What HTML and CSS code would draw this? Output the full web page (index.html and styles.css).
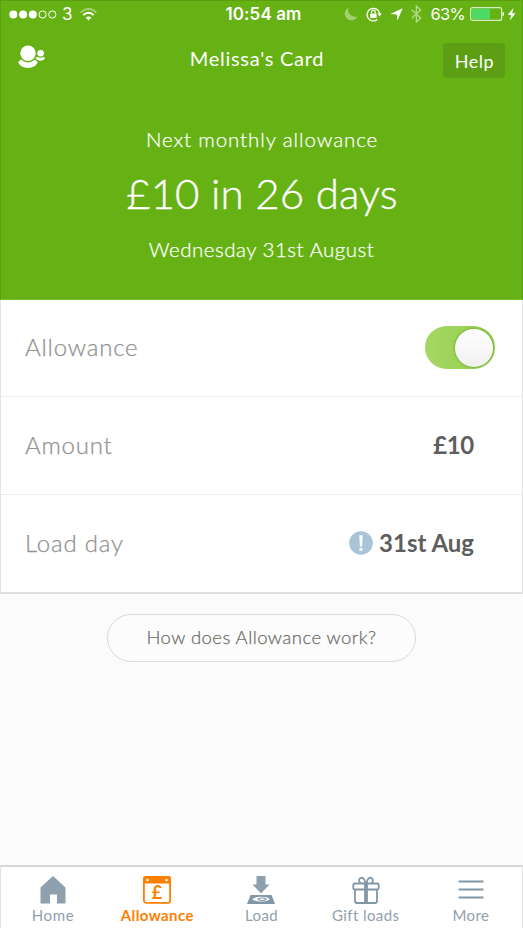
FILE: index.html
```html
<!DOCTYPE html>
<html lang="en">
<head>
<meta charset="utf-8">
<title>Allowance</title>
<link rel="stylesheet" href="styles.css">
</head>
<body>
<div class="app">
  <header class="hero">
    <div class="status">
      <div class="status-left">
        <svg width="48" height="9" viewBox="0 0 48 9"><g fill="#fff"><circle cx="4.3" cy="4.5" r="4"/><circle cx="14.1" cy="4.5" r="4"/><circle cx="23.8" cy="4.5" r="4"/></g><g fill="none" stroke="#fff" stroke-width="1"><circle cx="33.6" cy="4.5" r="3.6"/><circle cx="43.3" cy="4.5" r="3.6"/></g></svg>
        <span class="carrier">3</span>
        <svg class="wifi" width="17" height="13" viewBox="0 0 17 13" fill="none" stroke="#fff" stroke-width="1.9"><path d="M.8 4.6C5-.2 12-.2 16.200 4.600" opacity=".4"/><path d="M3.300 7.200C6.200 4 10.800 4 13.700 7.200"/><path d="M8.500 12.500 5.600 9.600C7.200 8 9.800 8 11.400 9.600Z" fill="#fff" stroke="none"/></svg>
      </div>
      <span class="clock">10:54 am</span>
      <div class="status-right">
        <svg width="14" height="14" viewBox="0 0 14 14"><path d="M4.500 .8A6.600 6.600 0 1 0 13.500 9.300 6.900 6.900 0 0 1 4.500 .8Z" fill="#fff" opacity=".4"/></svg>
        <svg class="lock" width="16" height="15" viewBox="0 0 16 15" fill="none" stroke="#fff"><path d="M11.300 12.600A6.300 6.300 0 1 1 13.600 6.500" stroke-width="1.300"/><path d="M11.400 6.200h4.400l-2.200 3.200Z" fill="#fff" stroke="none"/><rect x="4.200" y="6.400" width="6.400" height="4.600" rx=".6" fill="#fff" stroke="none"/><path d="M5.600 6.500V5a1.800 1.800 0 0 1 3.600 0v1.500" stroke-width="1.200"/></svg>
        <svg class="arrow" width="13" height="13" viewBox="0 0 13 13"><path d="M12.700.3 7.400 12.600 6.800 6.500.3 6Z" fill="#fff"/></svg>
        <svg class="bt" width="11" height="18" viewBox="0 0 11 18" fill="none" stroke="#fff" stroke-width="1.400" opacity=".5"><path d="m.7 4.800 9 8.200-4.300 4V1l4.300 4-9 8.200"/></svg>
        <span class="percent">63%</span>
        <svg class="battery" width="47" height="14" viewBox="0 0 47 14"><rect x=".6" y=".6" width="31" height="12.800" rx="2" fill="none" stroke="#fff" stroke-opacity=".75" stroke-width="1.200"/><rect x="1.700" y="1.700" width="18.300" height="10.600" rx=".6" fill="#4cd964"/><path d="M32.500 4.800c2 .2 2 4.200 0 4.400Z" fill="#fff"/><path d="M43.500.8 37.800 7.900h3.300l-1.300 5.500 5.800-7.200h-3.400Z" fill="#fff"/></svg>
      </div>
    </div>
    <nav class="navbar">
      <svg class="people" width="28" height="24" viewBox="0 0 28 24" fill="#fff"><circle cx="11" cy="8.300" r="7.700"/><path d="M1 17.300 4 14.600Q11 20.200 18 14.600L20.800 17.300Q18 23 11 23 4 23 1 17.300Z"/><circle cx="23.600" cy="8.300" r="3.300"/><path d="M18.500 13 20 11.700Q23.500 14 26.600 11.700L28 13Q27 15.800 23.300 15.800 20 15.800 18.500 13Z"/></svg>
      <h1 class="title">Melissa's Card</h1>
      <button class="help"><span>Help</span></button>
    </nav>
    <p class="caption">Next monthly allowance</p>
    <p class="headline">£10 in 26 days</p>
    <p class="date">Wednesday 31st August</p>
  </header>
  <main>
    <section class="rows">
      <div class="row"><span class="label">Allowance</span><span class="toggle"><span class="knob"></span></span></div>
      <div class="row"><span class="label">Amount</span><span class="value"><span class="sum">£10</span></span></div>
      <div class="row"><span class="label">Load day</span><span class="value"><svg class="info" width="24" height="24" viewBox="0 0 24 24"><circle cx="12" cy="12" r="11.800" fill="#a9c4d7"/><path d="M10.300 4.300h3.400l-.6 11.200h-2.200Z" fill="#fff"/><circle cx="12" cy="18.400" r="1.700" fill="#fff"/></svg><span class="day">31st Aug</span></span></div>
    </section>
    <button class="how"><span>How does Allowance work?</span></button>
  </main>
  <nav class="tabs">
    <a class="tab home"><svg width="30" height="30" viewBox="0 0 30 30"><path d="M15 1 27.500 12.400V28.500H19V19.500H12V28.500H2.500V12.400Z" fill="#8ea0ad"/></svg><span>Home</span></a>
    <a class="tab allowance"><svg width="30" height="30" viewBox="0 0 30 30"><rect x="1.900" y="1.900" width="26.200" height="26" rx="2.500" fill="none" stroke="#ff7f00" stroke-width="1.800"/><path d="M1 8.500V3.500a2.500 2.500 0 0 1 2.500-2.500h23a2.500 2.500 0 0 1 2.500 2.500v5Z" fill="#ff7f00"/><circle cx="5.500" cy="5" r="1.300" fill="#fff"/><circle cx="24.500" cy="5" r="1.300" fill="#fff"/><text class="pound" x="15" y="24" text-anchor="middle">£</text></svg><span>Allowance</span></a>
    <a class="tab load"><svg width="30" height="30" viewBox="0 0 30 30"><path d="M10.500 1h9v8.500h4L15 18.500 6.500 9.500h4Z" fill="#8ea0ad"/><path d="M4.500 20H25.500l3.500 9H1Z" fill="#8297a6"/><path d="M6 24.200C10 21 20 21 24 24.200 20 27.300 10 27.300 6 24.200Z" fill="#fff"/><ellipse cx="16" cy="24.200" rx="4.500" ry="1.700" fill="#8297a6"/><ellipse cx="16" cy="24.200" rx="3" ry=".8" fill="#fff"/></svg><span>Load</span></a>
    <a class="tab gift"><svg width="30" height="30" viewBox="0 0 30 30" fill="none" stroke="#8297a6" stroke-width="1.800"><rect x="2.300" y="8.500" width="25.400" height="6" rx="1.500"/><path d="M4 14.500V26a2 2 0 0 0 2 2h18a2 2 0 0 0 2-2V14.500"/><path d="M14 8.500h2V28h-2Z" fill="#8ea0ad"/><path d="M14.500 8.500C14 4 11.500 2 9.500 3S7.500 6.500 9.500 8M15.500 8.500C16 4 18.500 2 20.500 3S22.500 6.500 20.500 8"/></svg><span>Gift loads</span></a>
    <a class="tab more"><svg width="30" height="30" viewBox="0 0 30 30" stroke="#8297a6" stroke-width="1.900"><path d="M2.500 6.500h25M2.500 14.500h25M2.500 22.500h25"/></svg><span>More</span></a>
  </nav>
</div>
</body>
</html>
```

FILE: styles.css
```css
* { box-sizing: border-box; }
body { margin: 0; font-family: Lato, "Open Sans", sans-serif; }
.app { width: 523px; height: 929px; display: flex; flex-direction: column; background: #fbfbfb; border-bottom: 1px solid #fff; }
svg { display: block; flex: none; }
button { font-family: inherit; padding: 0; }
.hero { height: 300px; flex: none; background: #66b214; color: #fff; border: 1px solid #5ca012; border-bottom: 1px solid #78bd2e; text-align: center; }
.status { height: 26px; display: grid; grid-template-columns: 1fr auto 1fr; align-items: center; padding: 0 5px 0 8px; font-family: Inter, sans-serif; font-size: 17px; line-height: 26px; }
.status-left, .status-right { display: flex; align-items: center; }
.status-right { justify-content: flex-end; }
.carrier { margin-left: 5px; }
.wifi { margin-left: 7px; }
.clock { font-weight: 600; font-size: 17px; letter-spacing: .1px; margin-left: 1px; }
.lock { margin-left: 8px; }
.arrow { margin-left: 8px; }
.bt { margin-left: 8px; }
.percent { margin-left: 8px; font-size: 16.5px; letter-spacing: -.7px; }
.battery { margin-left: 5px; }
.navbar { height: 54px; display: grid; grid-template-columns: 80px 1fr 80px; padding: 0 17px 0 16px; }
.people { margin-top: 18px; }
.title { margin: 18px 0 0 -8px; font-size: 20px; line-height: 26px; font-weight: 400; letter-spacing: .7px; }
.help { width: 62px; height: 35px; margin-top: 16px; justify-self: end; border: 0; border-radius: 4px; background: #5c9e14; color: #fff; font-size: 18px; letter-spacing: .5px; padding-left: 1px; }
p { margin: 0; white-space: nowrap; }
.caption, .date { font-size: 20.5px; line-height: 26px; font-weight: 300; letter-spacing: .9px; -webkit-text-stroke: .25px #fff; }
.caption { margin-top: 45px; padding-left: 1px; }
.headline { margin-top: 15px; font-size: 42px; line-height: 52px; font-weight: 300; letter-spacing: .1px; padding-left: 1px; -webkit-text-stroke: .4px #fff; }
.date { margin-top: 17px; letter-spacing: .5px; }
main { flex: 1; }
.rows { background: #fff; border: 1px solid #e3e3e3; border-top: 0; border-bottom: 2px solid #dedede; height: 294px; }
.row { height: 97px; display: flex; align-items: center; justify-content: space-between; padding: 0 27px 0 24px; border-bottom: 1px solid #ececec; }
.row:nth-child(2) { height: 98px; }
.row:last-child { border: 0; }
.label { padding-bottom: 3px; font-size: 24px; font-weight: 300; color: #929292; letter-spacing: .8px; -webkit-text-stroke: .25px #929292; }
.value { display: flex; align-items: center; margin-right: 21px; font-size: 24px; font-weight: 700; color: #5e5e5e; }
.sum { padding-bottom: 3px; letter-spacing: -.3px; }
.day { padding-bottom: 3px; }
.info { margin: -2px 6px 0 0; }
.toggle { width: 70px; height: 43px; margin-top: -1px; border-radius: 22px; background: linear-gradient(90deg, #a5d765, #93cf4b); display: flex; justify-content: flex-end; padding: 3px 2px; }
.knob { width: 38px; height: 38px; border-radius: 50%; background: linear-gradient(#fff, #f0f0f0); box-shadow: 0 0 3px #5d962a; }
.how { display: block; width: 309px; height: 48px; margin: 20px auto 0 107px; padding-bottom: 3px; border: 1px solid #dadada; border-radius: 24px; background: #fcfcfc; color: #6c6c66; font-size: 18.5px; font-weight: 300; letter-spacing: .45px; -webkit-text-stroke: .25px #6c6c66; }
.tabs { height: 63px; flex: none; display: grid; grid-template-columns: repeat(5, 1fr); background: #fff; border: 1px solid #e3e3e3; border-top: 2px solid #d6d6d6; border-bottom: 0; }
.tab { display: flex; flex-direction: column; align-items: center; padding-top: 8px; font-size: 15px; line-height: 18px; letter-spacing: .4px; color: #8fa1ad; white-space: nowrap; }
.tab > span { margin-top: 1px; }
.home span { letter-spacing: .7px; }
.more { padding-left: 2px; }
.allowance { color: #ff7f00; font-weight: 700; }
.pound { font-size: 18px; fill: #ff7f00; letter-spacing: 0; }
```
